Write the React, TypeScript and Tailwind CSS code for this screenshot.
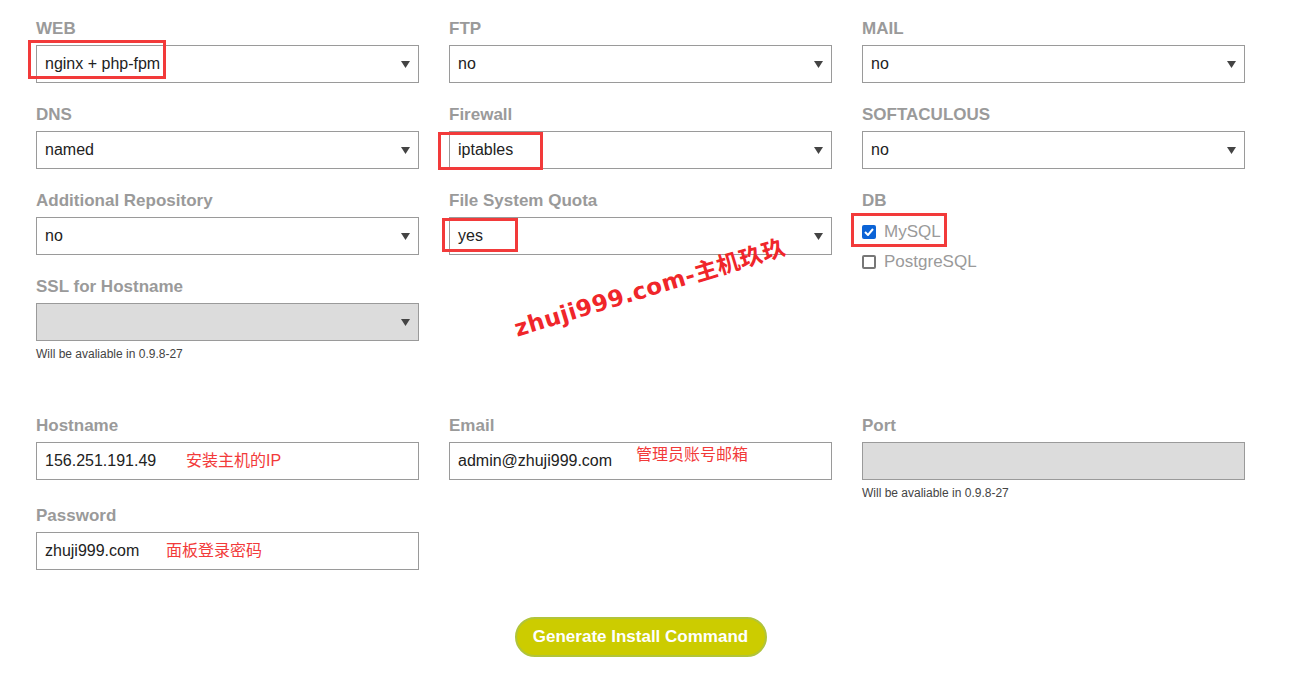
import React from "react";

const font = { fontFamily: '"Liberation Sans", Arial, "Noto Sans CJK SC", sans-serif' };

function Label({ children }: { children: React.ReactNode }) {
  return <div className="h-[20px] text-[17px] leading-[20px] font-bold text-[#9a9a9a] mb-[6px]">{children}</div>;
}

function Arrow() {
  return (
    <svg className="absolute right-[8px] top-[15px]" width="9" height="7" viewBox="0 0 9 7">
      <path d="M0 0 H9 L4.5 7 Z" fill="#444" />
    </svg>
  );
}

function Select({ value, disabled }: { value?: string; disabled?: boolean }) {
  return (
    <div
      className={
        "relative h-[38px] border border-[#9a9a9a] pl-[8px] text-[16px] leading-[36px] text-[#222] " +
        (disabled ? "bg-[#dcdcdc]" : "bg-white")
      }
    >
      {value}
      <Arrow />
    </div>
  );
}

function Mark({ className }: { className: string }) {
  return <div className={"pointer-events-none absolute border-[3px] border-[#f23a3a] " + className} />;
}

function Note({ children }: { children: React.ReactNode }) {
  return <div className="mt-[6px] text-[12px] leading-[14px] text-[#444]">{children}</div>;
}

function Check({ checked, label }: { checked?: boolean; label: string }) {
  return (
    <div className="flex h-[30px] items-center gap-[8px] text-[17px] text-[#9a9a9a]">
      {checked ? (
        <span className="flex size-[14px] items-center justify-center rounded-[2px] bg-[#0b63d6]">
          <svg width="10" height="8" viewBox="0 0 10 8">
            <path d="M1 4 L4 7 L9 1" stroke="#fff" strokeWidth="2" fill="none" />
          </svg>
        </span>
      ) : (
        <span className="size-[14px] rounded-[2px] border-2 border-[#777] bg-white" />
      )}
      {label}
    </div>
  );
}

export default function App() {
  return (
    <div className="relative min-h-[673px] bg-white pl-[36px] pt-[19px]" style={font}>
      <div className="grid w-[1209px] grid-cols-[383px_383px_383px] gap-x-[30px] gap-y-[22px]">
        <div className="relative">
          <Label>WEB</Label>
          <Select value="nginx + php-fpm" />
          <Mark className="left-[-8px] top-[21px] h-[39px] w-[138px]" />
        </div>
        <div>
          <Label>FTP</Label>
          <Select value="no" />
        </div>
        <div>
          <Label>MAIL</Label>
          <Select value="no" />
        </div>

        <div>
          <Label>DNS</Label>
          <Select value="named" />
        </div>
        <div className="relative">
          <Label>Firewall</Label>
          <Select value="iptables" />
          <Mark className="left-[-11px] top-[27px] h-[38px] w-[105px]" />
        </div>
        <div>
          <Label>SOFTACULOUS</Label>
          <Select value="no" />
        </div>

        <div>
          <Label>Additional Repository</Label>
          <Select value="no" />
        </div>
        <div className="relative">
          <Label>File System Quota</Label>
          <Select value="yes" />
          <Mark className="left-[-7px] top-[27px] h-[34px] w-[76px]" />
        </div>
        <div className="relative">
          <Label>DB</Label>
          <div className="h-[38px]">
            <Check checked label="MySQL" />
            <Check label="PostgreSQL" />
          </div>
          <Mark className="left-[-11px] top-[22px] h-[34px] w-[96px]" />
        </div>

        <div>
          <Label>SSL for Hostname</Label>
          <Select disabled />
          <Note>Will be avaliable in 0.9.8-27</Note>
        </div>
      </div>

      <div className="mt-[55px] grid w-[1209px] grid-cols-[383px_383px_383px] gap-x-[30px] gap-y-[6px]">
        <div>
          <Label>Hostname</Label>
          <div className="flex h-[38px] items-center border border-[#9a9a9a] pl-[8px] text-[16px] text-[#222]">
            <span className="w-[141px]">156.251.191.49</span>
            <span className="text-[16px] text-[#f23a3a]">安装主机的IP</span>
          </div>
        </div>
        <div>
          <Label>Email</Label>
          <div className="flex h-[38px] items-center border border-[#9a9a9a] pl-[8px] text-[16px] text-[#222]">
            <span className="w-[178px]">admin@zhuji999.com</span>
            <span className="-mt-[13px] text-[16px] text-[#f23a3a]">管理员账号邮箱</span>
          </div>
        </div>
        <div>
          <Label>Port</Label>
          <div className="h-[38px] border border-[#9a9a9a] bg-[#dcdcdc]" />
          <Note>Will be avaliable in 0.9.8-27</Note>
        </div>

        <div>
          <Label>Password</Label>
          <div className="flex h-[38px] items-center border border-[#9a9a9a] pl-[8px] text-[16px] text-[#222]">
            <span className="w-[121px]">zhuji999.com</span>
            <span className="text-[16px] text-[#f23a3a]">面板登录密码</span>
          </div>
        </div>
      </div>

      <div className="mt-[47px] flex w-[1209px] justify-center">
        <button className="h-[40px] w-[252px] rounded-full border-2 border-[#b1c43a] bg-[#cccc00] text-[17px] font-bold text-white">
          Generate Install Command
        </button>
      </div>

      <div
        className="pointer-events-none absolute left-[515px] top-[312px] origin-left -rotate-[17deg] text-[23px] font-bold tracking-[0.5px] text-[#f0262a]"
        style={{ fontFamily: '"DejaVu Sans", "Noto Sans CJK SC", sans-serif' }}
      >
        zhuji999.com-主机玖玖
      </div>
    </div>
  );
}
